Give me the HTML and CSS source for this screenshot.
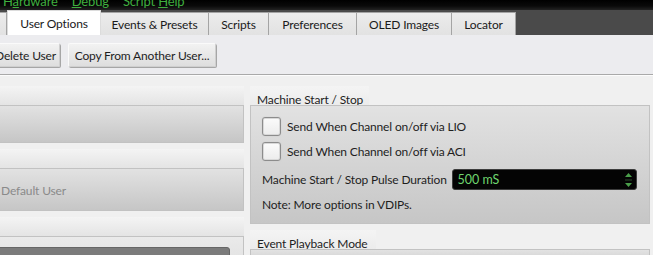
FILE: index.html
```html
<!DOCTYPE html>
<html>
<head>
<meta charset="utf-8">
<link rel="stylesheet" href="styles.css">
</head>
<body>
<div class="app">
  <div class="menubar">
    <span class="menu">H<u>a</u>rdware</span>
    <span class="menu"><u>D</u>ebug</span>
    <span class="menu">Script <u>H</u>elp</span>
  </div>
  <div class="tabbar">
    <div class="tab tab-edge"></div>
    <div class="tab tab-active tab-user">User Options</div>
    <div class="tab tab-events">Events &amp; Presets</div>
    <div class="tab tab-scripts">Scripts</div>
    <div class="tab tab-prefs">Preferences</div>
    <div class="tab tab-oled">OLED Images</div>
    <div class="tab tab-locator">Locator</div>
  </div>
  <div class="toolbar">
    <button class="btn btn-delete">Delete User</button>
    <button class="btn btn-copy">Copy From Another User...</button>
  </div>
  <div class="separator"></div>
  <div class="content">
    <div class="col col-left">
      <div class="group">
        <div class="group-title"></div>
        <div class="frame frame-dark frame-1"></div>
      </div>
      <div class="group">
        <div class="group-title"></div>
        <div class="frame frame-dark frame-2"><span class="muted">Default User</span></div>
      </div>
      <div class="group">
        <div class="group-title"></div>
        <div class="frame frame-light frame-3"><div class="darkbar"></div></div>
      </div>
    </div>
    <div class="col col-right">
      <div class="group">
        <div class="group-title titled"><span>Machine Start / Stop</span></div>
        <div class="frame frame-dark frame-machine">
          <label class="check-row"><span class="checkbox"></span>Send When Channel on/off via LIO</label>
          <label class="check-row"><span class="checkbox"></span>Send When Channel on/off via ACI</label>
          <div class="field-row">
            <span class="field-label">Machine Start / Stop Pulse Duration</span>
            <div class="spinbox">
              <span class="spin-value">500 mS</span>
              <svg class="spin-arrows" width="9" height="16" viewBox="0 0 9 16">
                <polygon points="4.5,1 8,5 1,5" fill="#4a9e4a"/>
                <rect x="1" y="7.5" width="7" height="1" fill="#2a4a2a"/>
                <polygon points="1,11 8,11 4.5,15" fill="#4a9e4a"/>
              </svg>
            </div>
          </div>
          <div class="note">Note: More options in VDIPs.</div>
        </div>
      </div>
      <div class="group">
        <div class="group-title titled"><span class="title-wide">Event Playback Mode</span></div>
        <div class="frame frame-dark frame-event"></div>
      </div>
    </div>
  </div>
</div>
</body>
</html>
```

FILE: styles.css
```css
* { box-sizing: border-box; }
html, body { margin: 0; padding: 0; }
body {
  width: 653px;
  height: 255px;
  overflow: hidden;
  font-family: Lato, "Open Sans", sans-serif;
  font-size: 12px;
  letter-spacing: -0.15px;
  color: #1e1e1e;
  background: #f0f0f0;
}
.app { width: 653px; height: 255px; overflow: hidden; display: flex; flex-direction: column; }

.menubar {
  height: 10px;
  flex: none;
  overflow: hidden;
  background: linear-gradient(#000 0%, #0a0a0a 60%, #222 100%);
  display: flex;
  gap: 14px;
  padding-left: 3px;
}
.menu {
  color: #3fae3f;
  font-size: 13px;
  line-height: 14px;
  margin-top: -6px;
  white-space: nowrap;
}
.menu u { text-underline-offset: 1px; }

.tabbar {
  height: 25px;
  flex: none;
  background: #4a4a4a;
  display: flex;
  align-items: flex-end;
}
.tab {
  height: 23px;
  background: linear-gradient(#ececec, #e2e2e2);
  border: 1px solid #a4a4a4;
  border-bottom: none;
  border-left: none;
  display: flex;
  align-items: center;
  justify-content: center;
  white-space: nowrap;
  color: #1a1a1a;
  padding-top: 1px;
}
.tab-edge { width: 7px; border-right: 1px solid #a4a4a4; }
.tab-active {
  height: 25px;
  background: #fff;
  border: 1px solid #dcdcdc;
  border-bottom: none;
  padding-top: 0;
}
.tab-user { width: 94px; }
.tab-events { width: 108px; }
.tab-scripts { width: 60px; }
.tab-prefs { width: 88px; }
.tab-oled { width: 95px; }
.tab-locator { width: 64px; }

.toolbar {
  height: 39px;
  flex: none;
  background: #ececef;
  display: flex;
  align-items: flex-start;
  gap: 8px;
  padding-top: 8px;
}
.btn {
  height: 24px;
  font-family: inherit;
  font-size: 12px;
  letter-spacing: -0.15px;
  color: #1e1e1e;
  background: linear-gradient(#f2f2f2, #dedede);
  border: 1px solid #cfcfcf;
  border-top-color: #fafafa;
  border-left-color: #fafafa;
  border-radius: 2px;
  box-shadow: 1px 1px 0 #a6a6a6;
  padding: 0 4px;
  white-space: nowrap;
}
.btn-delete { margin-left: -10px; width: 70px; text-align: right; padding-right: 5px; }
.btn-copy { width: 148px; }

.separator {
  height: 2px;
  flex: none;
  border-top: 1px solid #a9a9a9;
  background: #fcfcfc;
}

.content {
  flex: 1;
  display: flex;
  gap: 6px;
  padding-top: 10px;
  background: #f0f0f0;
}
.col { display: flex; flex-direction: column; gap: 6px; }
.col-left { width: 254px; margin-left: -10px; }
.col-right { width: 400px; }

.group { display: flex; flex-direction: column; }
.group-title {
  height: 19px;
  background: linear-gradient(#f4f4f4, #e4e4e4);
}
.group-title.titled {
  background: #f0f0f0;
}
.group-title.titled span {
  display: inline-block;
  height: 19px;
  line-height: 14px;
  padding: 7px 8px 0 7px;
  width: 119px;
  background: linear-gradient(#f4f4f4, #ececec);
  white-space: nowrap;
}
.group-title.titled span.title-wide { width: 126px; }

.frame {
  border: 1px solid #c2c2c2;
}
.frame-dark { background: linear-gradient(#e2e2e2, #c6c6c6); }
.frame-light { background: linear-gradient(#eaeaea, #dedede); }
.frame-1 { height: 38px; }
.frame-2 {
  height: 43px;
  display: flex;
  align-items: center;
  padding-left: 10px;
  padding-top: 1px;
}
.muted { color: #8a8a8a; }
.frame-3 { height: 40px; padding-top: 10px; }
.darkbar {
  margin-right: 13px;
  height: 30px;
  background: #7b7b7b;
  border: 1px solid #666;
  border-radius: 0 3px 0 0;
}

.frame-machine {
  height: 119px;
  padding: 11px 12px 0 11px;
  display: flex;
  flex-direction: column;
}
.check-row {
  display: flex;
  align-items: center;
  gap: 6px;
  height: 19px;
  margin-bottom: 6px;
  white-space: nowrap;
}
.checkbox {
  width: 19px;
  height: 19px;
  border: 1px solid #8c8c8c;
  border-radius: 3px;
  background: linear-gradient(#fbfbfb, #ececec);
  box-shadow: inset 0 0 0 1px #d8d8d8, 0 0 1px #bbb;
}
.field-row {
  display: flex;
  align-items: center;
  height: 21px;
  margin-top: 2px;
}
.field-label { width: 191px; white-space: nowrap; }
.spinbox {
  width: 185px;
  height: 21px;
  background: #040404;
  border: 1px solid #3c3c3c;
  border-radius: 3px;
  display: flex;
  align-items: center;
  justify-content: space-between;
  padding: 0 3px 0 4px;
}
.spin-value { color: #6fd66f; letter-spacing: 0; font-size: 12.5px; }
.spin-arrows { display: block; }
.note { margin-top: 7px; }

.frame-event { height: 20px; }
```
